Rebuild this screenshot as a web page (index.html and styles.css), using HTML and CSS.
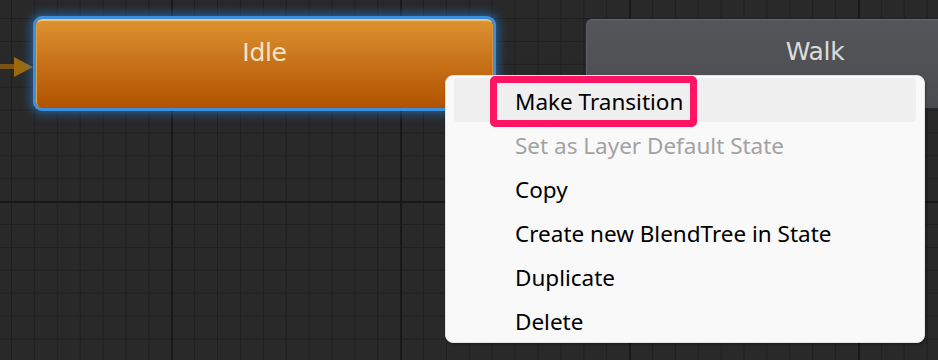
FILE: index.html
```html
<!DOCTYPE html>
<html lang="en">
<head>
  <meta charset="UTF-8">
  <title>Animator - Idle context menu</title>
  <link rel="stylesheet" href="styles.css">
</head>
<body>
  <div class="graph">
    <div class="entry-link">
      <span class="entry-line"></span>
      <span class="entry-head"></span>
    </div>

    <div class="state state-default state-selected">Idle</div>
    <div class="state state-walk">Walk</div>

    <ul class="context-menu">
      <li class="menu-item hover">Make Transition</li>
      <li class="menu-item disabled">Set as Layer Default State</li>
      <li class="menu-item">Copy</li>
      <li class="menu-item">Create new BlendTree in State</li>
      <li class="menu-item">Duplicate</li>
      <li class="menu-item">Delete</li>
      <li class="callout"></li>
    </ul>
  </div>
</body>
</html>
```

FILE: styles.css
```css
html, body {
  margin: 0;
  padding: 0;
}
body {
  width: 938px;
  height: 360px;
  overflow: hidden;
  background-color: #282828;
}
.graph {
  position: relative;
  width: 938px;
  height: 360px;
  overflow: hidden;
  background-color: #292929;
  background-image:
    linear-gradient(to right, #181818 2px, transparent 2px),
    linear-gradient(to bottom, #181818 2px, transparent 2px),
    linear-gradient(to right, #1f1f1f 1px, transparent 1px),
    linear-gradient(to bottom, #1f1f1f 1px, transparent 1px);
  background-size: 229px 229px, 229px 229px, 22.9px 22.9px, 22.9px 22.9px;
  background-position: 171px 0, 0 201px, 11px 0, 0 18px;
}

/* entry arrow into Idle */
.entry-link {
  position: absolute;
  left: 0;
  top: 56px;
  display: flex;
  align-items: center;
  height: 21px;
}
.entry-line {
  display: block;
  width: 14px;
  height: 5px;
  background: #7a5414;
}
.entry-head {
  display: block;
  width: 0;
  height: 0;
  border-top: 10.5px solid transparent;
  border-bottom: 10.5px solid transparent;
  border-left: 19px solid #9c6a0c;
}

/* state nodes */
.state {
  position: absolute;
  top: 19px;
  width: 457px;
  height: 89px;
  box-sizing: border-box;
  border-radius: 6px;
  display: flex;
  align-items: flex-start;
  justify-content: center;
  padding-top: 17px;
  font-family: "DejaVu Sans", sans-serif;
  font-size: 25px;
  letter-spacing: -0.3px;
}
.state-default {
  left: 36px;
  color: #f4e2c8;
  background: linear-gradient(to bottom, #dc922e 0%, #c8741a 45%, #b15200 100%);
  border-top: 2px solid #efc27e;
  border-left: 1px solid #e3a04a;
  border-right: 1px solid #d8913a;
}
.state-selected {
  box-shadow: 0 0 0 3px #3d8fdc, 0 0 10px 6px rgba(40, 130, 220, 0.55);
}
.state-walk {
  left: 586px;
  color: #dcdcdc;
  background: linear-gradient(to bottom, #54565a 0%, #4a4c50 100%);
  border-top: 1px solid #66686c;
  border-left: 1px solid #5e6064;
}

/* context menu */
.context-menu {
  position: absolute;
  left: 445px;
  top: 75px;
  width: 480px;
  height: 268px;
  box-sizing: border-box;
  margin: 0;
  padding: 2px 8px;
  list-style: none;
  background: #f9f9f9;
  border: 1px solid #e2e2e2;
  border-radius: 8px;
  box-shadow: 1px 2px 3px rgba(0, 0, 0, 0.25);
  font-family: "Noto Sans", "Open Sans", sans-serif;
  font-size: 22.5px;
  color: #000;
}
.menu-item {
  height: 44px;
  box-sizing: border-box;
  padding-left: 61px;
  padding-top: 10px;
  line-height: 28px;
  border-radius: 4px;
  white-space: nowrap;
}
.menu-item.hover {
  background: #efefef;
}
.menu-item.disabled {
  color: #a2a2a2;
}
.callout {
  position: absolute;
  left: 44px;
  top: 0;
  width: 207px;
  height: 51px;
  box-sizing: border-box;
  border: 7px solid #ff1464;
  border-radius: 5px;
}
```
